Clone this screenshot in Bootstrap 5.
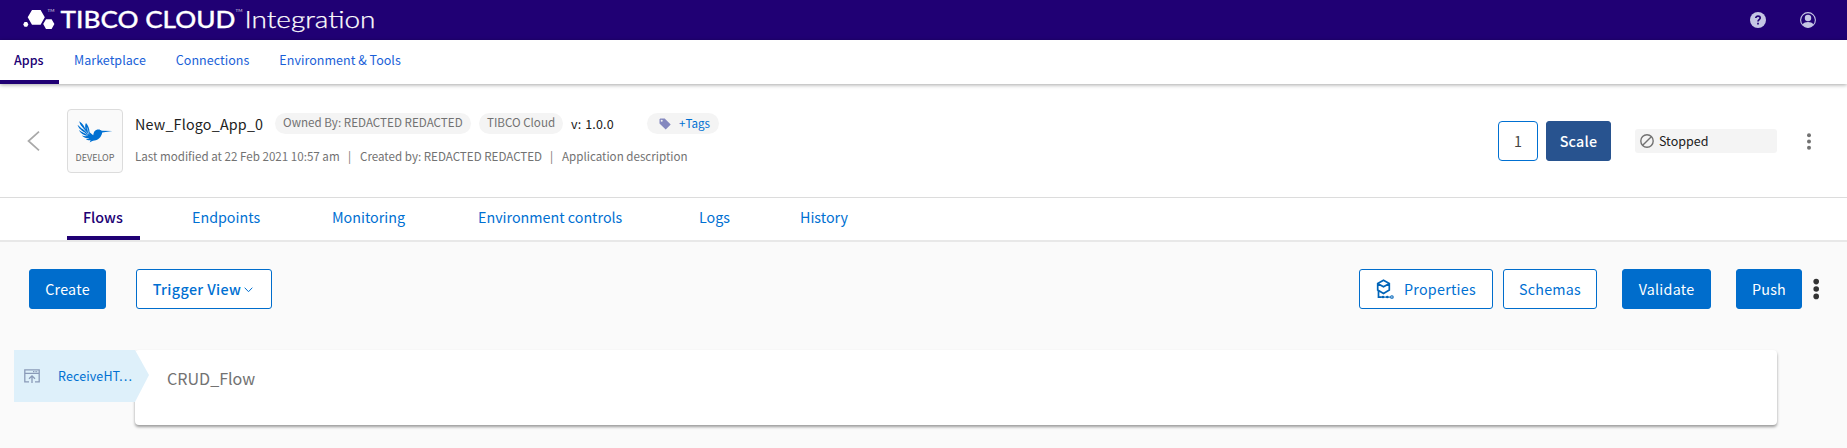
<!DOCTYPE html>
<html lang="en">
<head>
<meta charset="utf-8">
<meta name="viewport" content="width=device-width, initial-scale=1">
<title>TIBCO Cloud Integration</title>
<link href="https://cdn.jsdelivr.net/npm/bootstrap@5.3.0/dist/css/bootstrap.min.css" rel="stylesheet">
<script src="https://cdn.jsdelivr.net/npm/bootstrap@5.3.0/dist/js/bootstrap.bundle.min.js"></script>
<style>
body{font-family:"Noto Sans CJK SC",sans-serif;font-size:14.3px;line-height:20px;background:#fafafa;color:#212121;height:448px;overflow:hidden}
a{text-decoration:none;color:#0070d2}
svg{display:block;flex:none}
.topbar{height:40px;background:#200074;padding:0 31px 0 22px}
.logo{font-family:Lato,sans-serif;fill:#fff}
.mainnav{height:44px;background:#fff;box-shadow:0 1px 4px rgba(0,0,0,.35);position:relative;z-index:1;font-size:12.5px}
.mainnav a{padding:10px 15px 0;border-bottom:4px solid transparent;color:#1a5fd8;letter-spacing:.03px}
.mainnav a.active,.tabs a.active{color:#200074;font-weight:500;border-bottom-color:#200074}
.mainnav a.active{width:59px;padding-left:14px;padding-right:0}
.apphead{height:114px;background:#fff;border-bottom:1px solid #dcdcdc;padding:1px 30px 0 27px}
.tile{width:56px;height:64px;margin-left:27px;border:1px solid #dcdcdc;border-radius:4px;background:#fafafa;font-size:9px;line-height:12px;color:#6b6b6b}
.meta{margin-left:12px;color:#727272;font-size:11.6px}
.appname{font-size:14.3px;letter-spacing:.2px;color:#212121;width:128px}
.version{margin-left:8px;width:76px;font-size:12.5px;letter-spacing:.15px;word-spacing:1px;color:#212121}
.pill{height:21px;line-height:19px;border-radius:11px;background:#f4f4f4;padding:0 8px}
.count{width:40px;height:40px;border:1px solid #0070d2;border-radius:4px;color:#444}
.btn{--bs-btn-font-size:14.3px;--bs-btn-line-height:20px;--bs-btn-border-radius:3px;--bs-btn-padding-x:0;--bs-btn-padding-y:9px;--bs-btn-bg:#006dcc;--bs-btn-border-color:#006dcc;--bs-btn-color:#fff;height:40px;letter-spacing:.25px;white-space:nowrap}
.btn.hollow{--bs-btn-bg:#fff;--bs-btn-color:#0070d2}
.btn.view{width:136px;margin-left:30px;font-weight:500;letter-spacing:.38px}
.btn.scale{--bs-btn-bg:#28538f;--bs-btn-border-color:#28538f;width:65px;font-weight:500;margin-left:8px}
.status{width:142px;height:24px;border-radius:3px;background:#f4f4f4;margin-left:24px;padding-left:5px;font-size:12.5px;line-height:24px}
.tabs{height:44px;background:#fff;border-bottom:2px solid #e8e8e8;padding-left:67px}
.tabs a{height:42px;padding:9px 16px 0;border-bottom:4px solid transparent}
.tabs a.active{width:73px;margin-right:36px}
.tools{padding:27px 27px 0 29px}
.flowrow{margin:41px 70px 0 14px;height:75px;display:grid;grid-template-columns:121px 1fr}
.trigger{height:52px;width:135px;background:#def0fa;clip-path:polygon(0 0,121px 0,135px 25px,121px 52px,0 52px);padding-left:10px;z-index:1;font-size:12.5px;letter-spacing:.12px}
.flowcard{background:#fff;border-radius:4px;box-shadow:0 2px 3px rgba(0,0,0,.38);padding:16px 0 0 32px;font-size:16.1px;line-height:24px;color:#727272}
</style>
</head>
<body>
<header class="topbar d-flex align-items-center">
  <svg class="logo" width="360" height="40" viewBox="0 0 360 40">
    <path d="M10 10h8.600l4.200 7.300-4.200 7.500H10l-4.300-7.500z M24 19.200h5.600l2.800 4.900-2.800 4.900H24l-2.800-4.900z M2.500 22.100h2.600l1.300 2.300-1.300 2.300H2.500l-1.300-2.300z"/>
    <text x="38.500" y="28" font-size="23.500" font-weight="500" textLength="175" lengthAdjust="spacingAndGlyphs" stroke="#fff" stroke-width=".3">TIBCO CLOUD</text>
    <text x="222.500" y="28" font-size="24" font-weight="300" textLength="131" lengthAdjust="spacingAndGlyphs" stroke="#fff" stroke-width=".25">Integration</text>
    <g font-size="4.500" opacity=".8"><text x="25.500" y="11.500">TM</text><text x="213.500" y="11.500">TM</text></g>
  </svg>
  <div class="ms-auto d-flex">
    <svg width="16" height="16" viewBox="0 0 16 16"><circle cx="8" cy="8" r="8" fill="#c5c6e4"/><path d="M5.800 6.100C5.800 3.300 10.300 3.400 10.200 6c0 1.500-2.200 1.700-2.200 3.400M8 10.700v1.700" fill="none" stroke="#200074" stroke-width="1.700"/></svg>
    <svg width="16" height="16" viewBox="0 0 16 16" style="margin-left:34px"><circle cx="8" cy="8" r="7.400" fill="none" stroke="#c5c6e4" stroke-width="1.100"/><circle cx="8" cy="6" r="3.200" fill="#c5c6e4"/><path d="M2.600 12.500c2-3.200 8.800-3.200 10.800 0A7 7 0 0 1 8 15.400a7 7 0 0 1-5.400-2.900z" fill="#c5c6e4"/></svg>
  </div>
</header>
<nav class="mainnav d-flex">
  <a class="active" href="#">Apps</a><a href="#">Marketplace</a><a href="#">Connections</a><a href="#">Environment &amp; Tools</a>
</nav>
<section class="apphead d-flex align-items-center">
  <svg width="13" height="20" viewBox="0 0 13 20"><path d="M12 .7 1.500 10 12 19.300" fill="none" stroke="#a9a9a9" stroke-width="1.700"/></svg>
  <div class="tile d-flex flex-column align-items-center">
    <svg width="36" height="22" viewBox="0 0 36 22" style="margin:11px 0 9px" fill="#0070d2">
      <path d="M2.200.3c3.400 2.200 5.300 5 6.300 8.200C8 5.600 8 3.800 9 2c2.300 2.600 3.400 5.700 3.600 9.200l3.600 3c.5-3 1.600-5.300 4.200-5.700 2-.4 3.300.2 4.300 1.300L35.500 10l-10.300 1.400c-.7 4.600-3.900 7.400-7.800 8-1.900.3-3.200 1-4.700 2l.9-2.200c-2 .3-3.600-.3-4.800-1.300 1.600.1 2.700-.1 3.700-.5-3.100.1-5.700-.8-7.700-2.900 2.100.6 4 .8 5.800.5C6.800 14.200 3.400 12.200 1.800 9c2.600 1.900 5 2.900 7.300 3.400C5 10.300 1.300 7.400.6 3.800c2.500 2.700 5 4.500 7.700 6C5.500 7 3 4 2.200.3z"/>
      <path d="m4 5 7 8M2.500 8.500l8.500 5.800M10 6.500l2 7" stroke="#fafafa" stroke-width=".5" fill="none"/>
    </svg>
    <span>DEVELOP</span>
  </div>
  <div class="meta text-nowrap">
    <div class="d-flex align-items-center" style="margin-top:-3px">
      <span class="appname">New_Flogo_App_0</span>
      <span class="pill" style="margin-left:12px;width:196px;letter-spacing:.03px">Owned By: REDACTED REDACTED</span>
      <span class="pill" style="margin-left:8px;width:84px">TIBCO Cloud</span>
      <span class="version">v: 1.0.0</span>
      <a class="pill d-flex align-items-center" href="#" style="width:72px;padding-left:12px;color:#0070d2">
        <svg width="12" height="12" viewBox="0 0 12 12"><path fill-rule="evenodd" d="M1.300.5h4.400l6 6.100-5 5L.5 5.500V1.300zM2.700 1.700a1 1 0 1 0 0 2 1 1 0 0 0 0-2z" fill="#8488bf"/></svg>
        <span style="margin-left:8px">+Tags</span></a>
    </div>
    <div class="d-flex" style="margin-top:12px"><span style="width:213px">Last modified at 22 Feb 2021 10:57 am</span><span style="width:12px">|</span><span style="width:190px">Created by: REDACTED REDACTED</span><span style="width:12px">|</span><span>Application description</span></div>
  </div>
  <div class="count ms-auto d-flex align-items-center justify-content-center">1</div>
  <button class="btn scale" type="button">Scale</button>
  <div class="status d-flex align-items-center"><svg width="14" height="14" viewBox="0 0 14 14" fill="none" stroke="#727272" stroke-width="1.400"><circle cx="7" cy="7" r="6.200"/><path d="m2.700 11.300 8.600-8.600"/></svg><span style="margin-left:5px">Stopped</span></div>
  <svg width="4" height="17" viewBox="0 0 4 17" fill="#727272" style="margin:0 6px 0 30px"><circle cx="2" cy="2.300" r="2"/><circle cx="2" cy="8.500" r="2"/><circle cx="2" cy="14.700" r="2"/></svg>
</section>
<nav class="tabs d-flex">
  <a class="active" href="#">Flows</a><a href="#" style="width:140px">Endpoints</a><a href="#" style="width:146px">Monitoring</a><a href="#" style="width:221px">Environment controls</a><a href="#" style="width:101px">Logs</a><a href="#">History</a>
</nav>
<main>
  <div class="tools d-flex align-items-center">
    <button class="btn" type="button" style="width:77px">Create</button>
    <button class="btn hollow view d-flex align-items-center justify-content-center" type="button">Trigger View<svg width="9" height="6" viewBox="0 0 9 6" style="margin:2px 2px 0 3px"><path d="m.7.7 3.800 4 3.800-4" fill="none" stroke="#0070d2" stroke-width="1"/></svg></button>
    <button class="btn hollow ms-auto d-flex align-items-center" type="button" style="width:134px;padding-left:16px">
      <svg width="18" height="20" viewBox="0 0 18 20" fill="none" stroke="#0064b8" stroke-width="1.700"><path d="M7.500 1.200 13.300 4.500v6.600L7.500 14.400 1.700 11.100V4.500zM2 4.700l5.500 3 5.500-3M1.700 10.500l.8 1.800v5.800h3"/><path d="M5 18.100h9" stroke-width="1.100"/><circle cx="7" cy="18" r="1.300" fill="#0064b8" stroke="none"/><circle cx="11.300" cy="18" r="1.300" fill="#0064b8" stroke="none"/><circle cx="15.900" cy="18" r="1.300" stroke-width="1.100"/></svg>
      <span style="margin-left:10px">Properties</span></button>
    <button class="btn hollow" type="button" style="width:94px;margin-left:10px">Schemas</button>
    <button class="btn" type="button" style="width:89px;margin-left:25px">Validate</button>
    <button class="btn" type="button" style="width:66px;margin-left:25px">Push</button>
    <svg width="7" height="22" viewBox="0 0 7 22" fill="#333" style="margin-left:11px"><circle cx="3.200" cy="3.600" r="2.800"/><circle cx="3.200" cy="11" r="2.800"/><circle cx="3.200" cy="18.400" r="2.800"/></svg>
  </div>
  <div class="flowrow">
    <a class="trigger d-flex align-items-center" href="#">
      <svg width="16" height="15" viewBox="0 0 16 15" fill="none" stroke="#8a9ab8" stroke-width="1.300"><path d="M5 12.800H.8V.8h14.400v12H11M1 4.300h14M8 14V8M5 9.800l3-3 3 3"/><path d="M9 2.600h4.500" stroke-dasharray="1 .6"/></svg>
      <span style="margin-left:18px">ReceiveHT…</span></a>
    <div class="flowcard">CRUD_Flow</div>
  </div>
</main>
</body>
</html>
